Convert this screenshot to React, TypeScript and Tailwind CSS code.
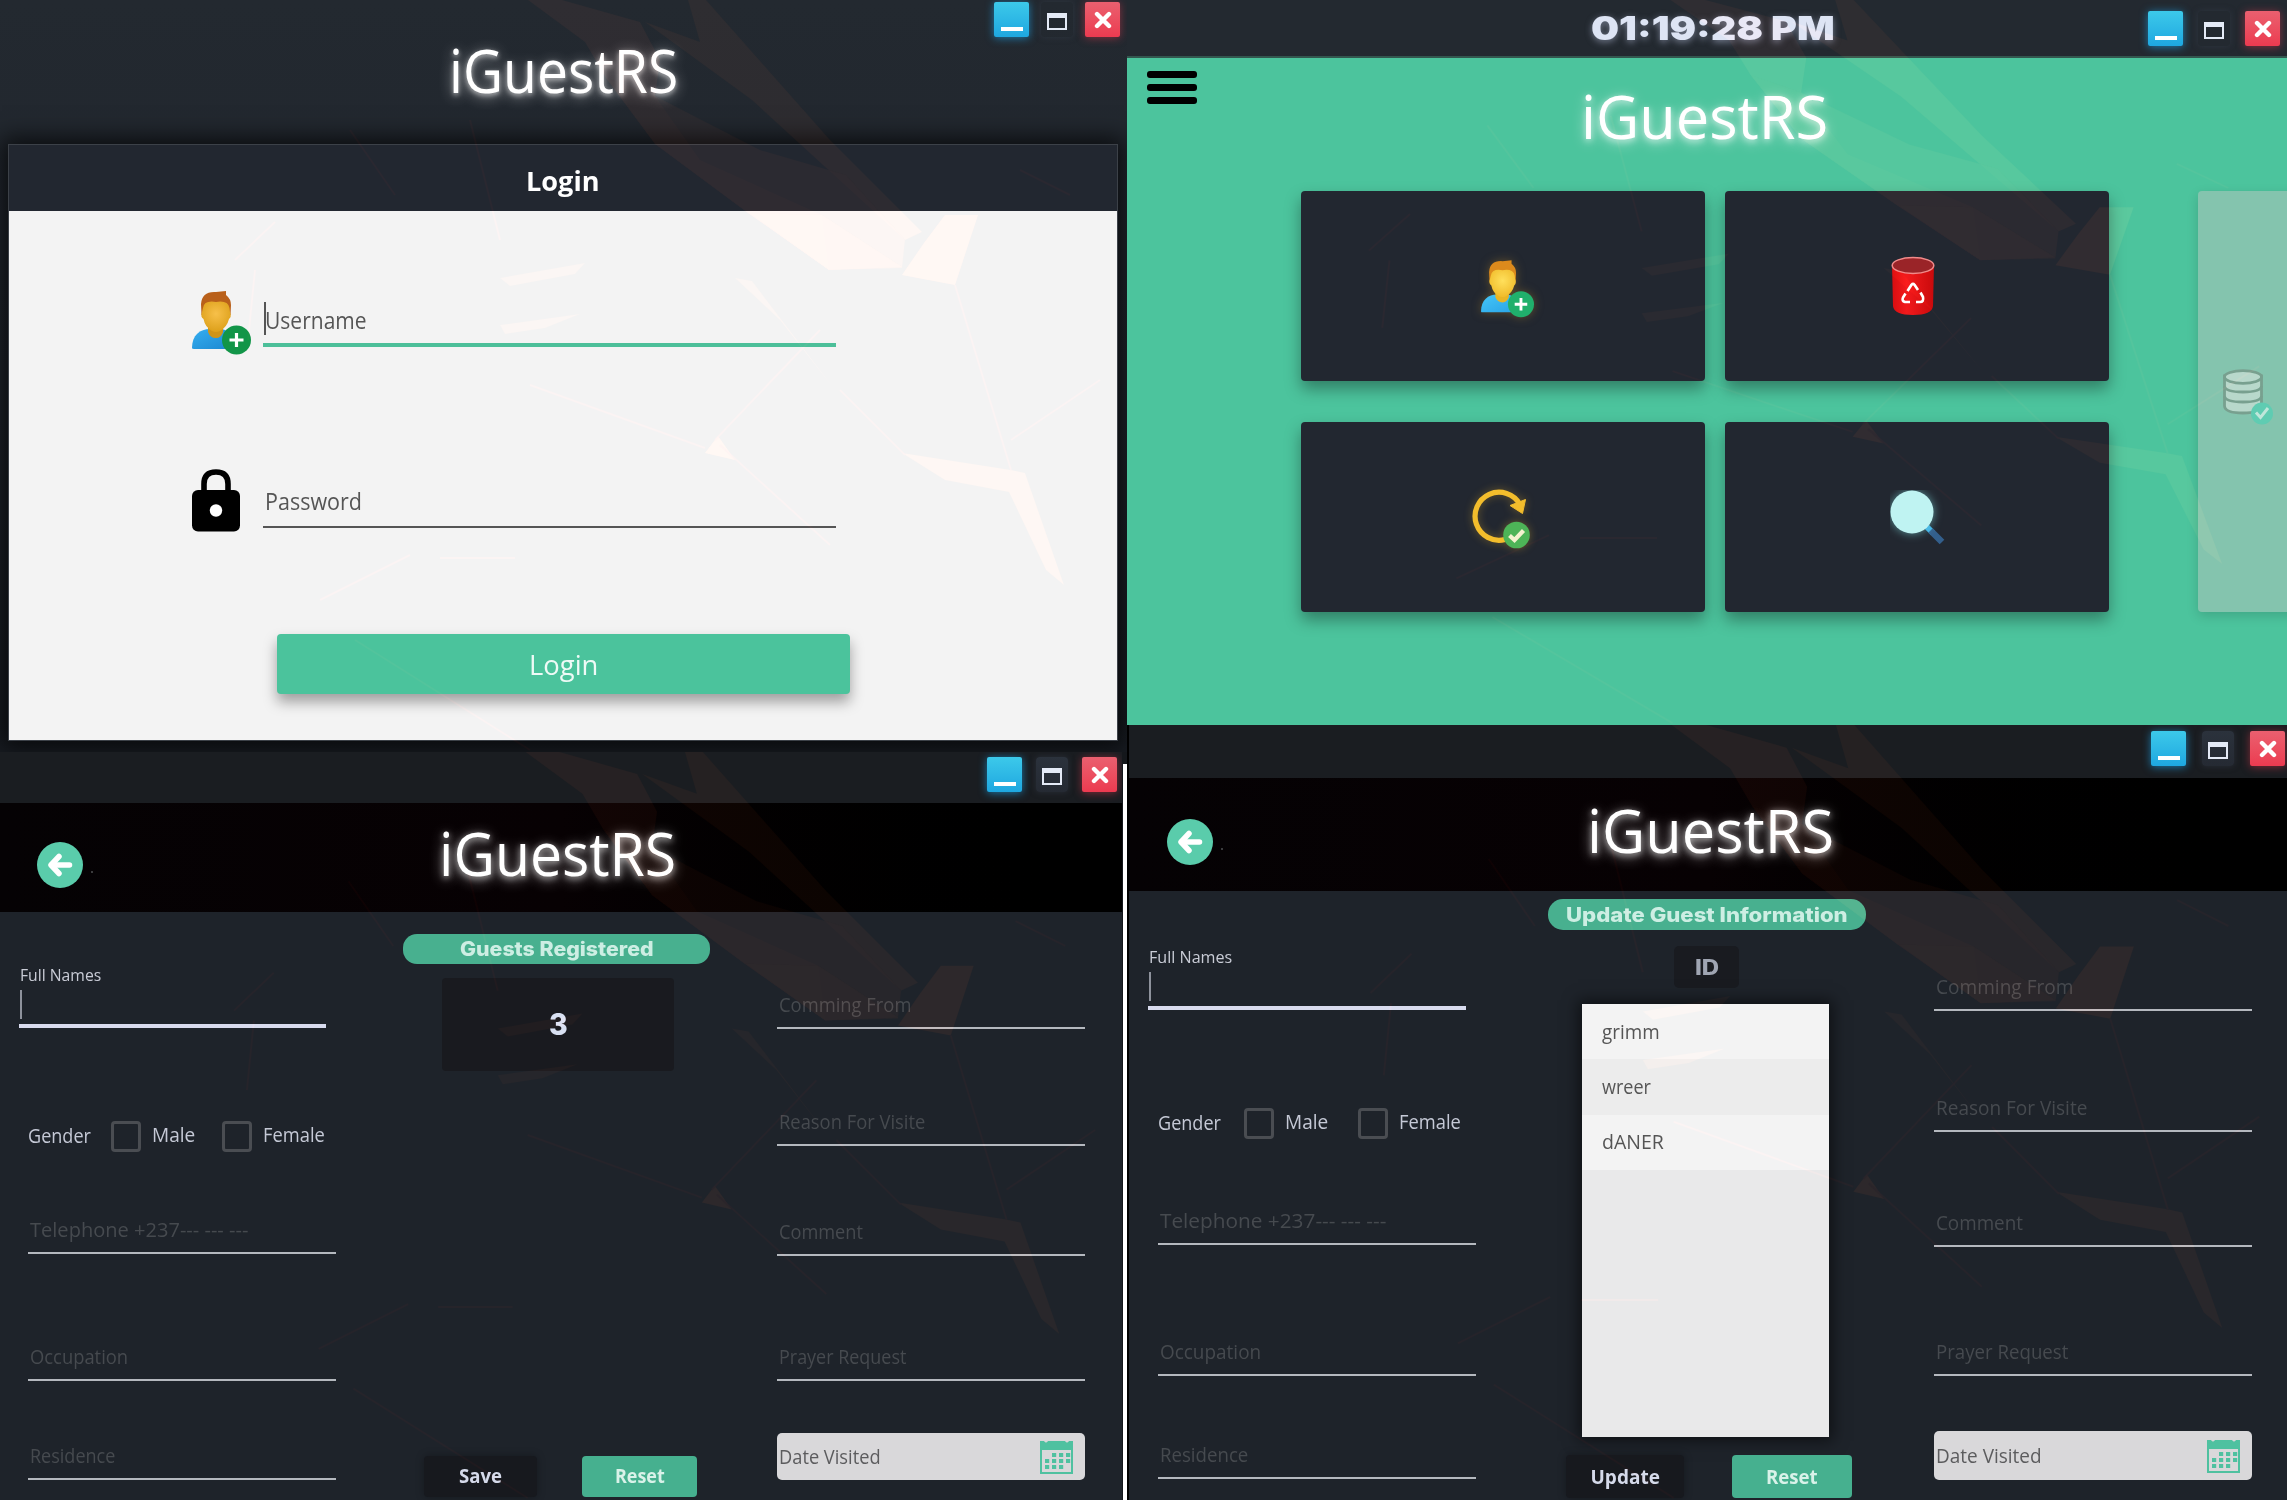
import { useLayoutEffect, useRef, useState, type ReactNode } from "react";

/* Text squeezed horizontally to an exact width. */
function Fit({ w, children, className = "" }: { w: number; children: ReactNode; className?: string }) {
  const ref = useRef<HTMLSpanElement>(null);
  const [scale, setScale] = useState(1);
  useLayoutEffect(() => {
    if (ref.current) setScale(w / ref.current.offsetWidth);
  }, [w]);
  return (
    <span className={`block whitespace-nowrap ${className}`} style={{ width: w }}>
      <span ref={ref} className="inline-block origin-left" style={{ transform: `scaleX(${scale})` }}>
        {children}
      </span>
    </span>
  );
}

/* Faint faceted wallpaper that shines through every window. */
function Art() {
  return (
    <svg
      className="pointer-events-none absolute inset-0 h-full w-full mix-blend-plus-lighter"
      viewBox="0 0 1127 752"
      preserveAspectRatio="none"
    >
      <g fill="#0f0502">
        <path d="M528 0 L562 0 L640 22 L660 60 L655 96 L700 160 L822 215 L829 270 L748 213 L655 144 L606 78 L585 42Z" opacity="0.8" />
        <path d="M645 22 L700 42 L688 0 L706 0 L830 140 L922 232 L905 240 L752 100Z" opacity="0.7" />
        <path d="M606 78 L655 96 L760 150 L846 175 L905 240 L902 268 L829 270 L748 213 L655 144Z" opacity="0.6" />
      </g>
      <g fill="#0f0501">
        <path d="M749 213 L822 215 L902 267 L829 270Z" opacity="0.7" />
        <path d="M945 215 L978 215 L955 285 L902 275 L924 243Z" />
        <path d="M902 453 L1011 470 L1025 473 L1064 585 L1046 570 L1009 492 L945 480Z" opacity="0.7" />
        <path d="M500 278 L585 263 L575 274 L510 286Z" opacity="0.5" />
        <path d="M500 325 L580 314 L545 328 L505 334Z" opacity="0.5" />
        <path d="M735 278 L752 281 L835 390 L780 320Z" opacity="0.5" />
        <path d="M705 453 L718 436 L735 460Z" />
      </g>
      <g fill="none" stroke="#0c0200" strokeWidth="2" opacity="0.7">
        <path d="M500 240 L470 120 M235 260 L275 222 M248 340 L255 270 M720 445 L830 545 M530 385 L705 448 M715 440 L820 330 M955 285 L1011 470 M1011 440 L1100 380 M1020 170 L1070 195 M355 640 L530 750 M320 600 L410 555 M440 558 L515 558 M840 390 L905 455 M350 130 L395 195" />
      </g>
    </svg>
  );
}

function WindowButtons({ maxClass, gap }: { maxClass: string; gap: string }) {
  return (
    <div className={`flex items-start ${gap}`}>
      <div className="flex h-[35px] w-[35px] items-end justify-center rounded-[2px] bg-gradient-to-b from-[#3cc9ea] to-[#1ea7e0] pb-[6px] shadow-[0_1px_8px_rgba(30,160,225,0.7)]">
        <div className="h-[4px] w-[22px] bg-white" />
      </div>
      <div className={`flex h-[35px] w-[32px] items-center justify-center rounded-[4px] shadow-[0_0_6px_rgba(58,66,80,0.5)] ${maxClass}`}>
        <div className="mt-1 h-[17px] w-[20px] border-2 border-t-[5px] border-[#e4eaf6]" />
      </div>
      <div className="flex h-[35px] w-[35px] items-center justify-center rounded-[2px] bg-gradient-to-b from-[#ea5f6f] to-[#ec3a50] shadow-[0_1px_8px_rgba(236,58,80,0.5)]">
        <svg width="18" height="18" viewBox="0 0 18 18" stroke="#fff" strokeWidth="4.4" strokeLinecap="round">
          <path d="M3 3 L15 15 M15 3 L3 15" />
        </svg>
      </div>
    </div>
  );
}

function Title({ w, className = "" }: { w: number; className?: string }) {
  return (
    <Fit
      w={w}
      className={`h-16 text-[60px] leading-[65px] text-white [text-shadow:0_2px_6px_rgba(255,255,255,0.6),0_3px_14px_rgba(255,255,255,0.6)] ${className}`}
    >
      iGuestRS
    </Fit>
  );
}

function UserAdd({ className, bright = false }: { className: string; bright?: boolean }) {
  const id = bright ? "b" : "d";
  return (
    <svg className={className} viewBox="0 0 59 64">
      <defs>
        <radialGradient id={`face${id}`} cx="0.5" cy="0.4" r="0.6">
          <stop offset="0" stopColor={bright ? "#ffe05c" : "#f7c04a"} />
          <stop offset="1" stopColor={bright ? "#f0bb2a" : "#dda01a"} />
        </radialGradient>
        <linearGradient id={`body${id}`} x1="0" y1="0" x2="1" y2="1">
          <stop offset="0" stopColor={bright ? "#45c6f8" : "#35aef0"} />
          <stop offset="1" stopColor={bright ? "#28a2e6" : "#1b87d0"} />
        </linearGradient>
      </defs>
      <path d="M0 57 C0 44 8 38 18 38 L30 38 C38 40 42 46 42 57 Q42 58 40 58 L2 58 Q0 58 0 57Z" fill={`url(#body${id})`} />
      <path d="M16 30 L31 30 L31 41 Q29 47 24 47 Q18 47 16 41Z" fill={bright ? "#e9b524" : "#cf9418"} />
      <path d="M9.500 24 L9 13 Q10 0 24 1 L34 0 L34 4 Q39 8 39 14 L38.500 24Z" fill={bright ? "#dc8a1c" : "#b9601a"} />
      <path d="M11 17 Q12 9 24 11 Q36 9 37.500 17 L38 21 Q40 26 37 28 Q35 36 28 40 Q24 42 20 40 Q13 36 11.500 28 Q8 26 10 21Z" fill={`url(#face${id})`} />
      <circle cx="44.500" cy="49" r="14.500" fill={bright ? "#20b06c" : "#129548"} />
      <path d="M44.500 42 V56 M37.500 49 H51.500" stroke="#fff" strokeWidth="3.200" />
    </svg>
  );
}

function Lock() {
  return (
    <svg width="48" height="63" viewBox="0 0 48 63">
      <path d="M12 24 V15 Q12 3 24 3 Q36 3 36 15 V24" fill="none" stroke="#000" strokeWidth="5.600" />
      <rect x="0" y="21" width="48" height="41.500" rx="6" />
      <circle cx="24" cy="41.500" r="6.200" fill="#fff" />
    </svg>
  );
}

function Bin() {
  return (
    <svg width="44" height="60" viewBox="0 0 44 60">
      <defs>
        <linearGradient id="bin" x1="0" x2="1">
          <stop offset="0" stopColor="#d80d10" />
          <stop offset="0.35" stopColor="#f21a1c" />
          <stop offset="1" stopColor="#c90a0c" />
        </linearGradient>
      </defs>
      <path d="M1 9 L2 50 Q3 59 22 59 Q41 59 42 50 L43 9Z" fill="url(#bin)" />
      <ellipse cx="22" cy="9.500" rx="20.800" ry="8" fill="#9a2428" stroke="#f08a8a" strokeWidth="1.500" />
      <g fill="none" stroke="#fff" strokeWidth="2.600" strokeLinejoin="round">
        <path d="M16.500 35 L20.500 28.800 Q22 27 23.500 28.800 L27 34" />
        <path d="M29.500 36.500 L32 41 Q33 46 29 46 L25 46" />
        <path d="M19 46 L14 46 Q10.500 45 12 41.500 L14.500 37.500" />
      </g>
    </svg>
  );
}

function Refresh() {
  return (
    <svg width="60" height="60" viewBox="0 0 60 60" className="drop-shadow-[0_0_4px_rgba(240,180,40,0.35)]">
      <path d="M49 15.500 A24 24 0 1 0 34 50.500" fill="none" stroke="#f3bd2c" strokeWidth="5.200" />
      <path d="M39 16.500 L54.500 10.500 L51.500 24.500Z" fill="#f3bd2c" stroke="#f3bd2c" strokeWidth="1" />
      <circle cx="45.500" cy="46" r="13.300" fill="#4db457" />
      <path d="M38.500 46.500 L43.500 51 L52.500 41.500" fill="none" stroke="#f3f2cf" strokeWidth="4.200" />
    </svg>
  );
}

function Search() {
  return (
    <svg width="56" height="56" viewBox="0 0 56 56">
      <path d="M36 36 L43 43" stroke="#3fb0e4" strokeWidth="6" />
      <path d="M40.500 40.500 L52 52" stroke="#335f8c" strokeWidth="6.500" />
      <circle cx="22" cy="22" r="21.500" fill="#bff3f2" className="drop-shadow-[0_0_5px_rgba(130,225,230,0.6)]" />
    </svg>
  );
}

function Database() {
  return (
    <svg width="52" height="58" viewBox="0 0 52 58">
      <g fill="#b8d8cb" stroke="#78a08f" strokeWidth="2.800">
        <path d="M2.500 7 V37 Q3 44 21 44 Q39 44 39.500 37 V7Z" />
        <path d="M2.500 17 Q3 23 21 23 Q39 23 39.500 17 M2.500 27 Q3 33 21 33 Q39 33 39.500 27" fill="none" />
        <ellipse cx="21" cy="8" rx="18.500" ry="6.300" />
      </g>
      <circle cx="40" cy="44.500" r="11" fill="#5fccb2" />
      <path d="M34 43.500 L38.500 48.500 L46 39" fill="none" stroke="#bfe6da" strokeWidth="3" />
    </svg>
  );
}

function Calendar() {
  const dots = [
    [12, 14], [19, 14], [26, 14],
    [5, 20], [12, 20], [19, 20], [26, 20],
    [5, 26], [12, 26], [19, 26],
  ];
  return (
    <svg width="33" height="34" viewBox="0 0 33 34" fill="#4fc1a0">
      <path d="M0 1 H4 Q6 4 8 1 H25 Q27 4 29 1 H33 V34 H0Z M2 10 V32 H31 V10Z" fillRule="evenodd" />
      {dots.map(([x, y]) => (
        <rect key={`${x}-${y}`} x={x} y={y - 1} width="4.200" height="4" />
      ))}
    </svg>
  );
}

function LoginWindow() {
  return (
    <section className="relative flex h-[752px] flex-col overflow-hidden bg-gradient-to-b from-[#232930] via-[#20252d] to-[#181c22]">
      <div className="flex h-[38px] justify-end pt-[2px] pr-[7px]">
        <WindowButtons gap="gap-[12px]" maxClass="" />
      </div>
      <Title w={229} className="mx-auto" />
      <div className="mr-[9px] ml-[8px] mt-[42px] flex h-[597px] flex-col border border-[#3c4148] shadow-[0_0_22px_6px_rgba(0,0,0,0.7)]">
        <div className="flex h-[66px] shrink-0 items-center justify-center bg-[#222730] pt-[5px]">
          <Fit w={74} className="text-[26px] leading-9 font-bold text-white">Login</Fit>
        </div>
        <div className="flex flex-1 flex-col bg-[#f3f3f3]">
          <div className="mt-[80px] ml-[183px] flex">
            <UserAdd className="h-[64px] w-[59px]" />
            <div className="ml-[12px] h-[56px] w-[573px] border-b-[4px] border-[#4cbf99] pt-[11px]">
              <div className="ml-px flex h-[33px] items-center border-l-2 border-[#555] pt-[2px]">
                <Fit w={102} className="-ml-px text-[23.5px] leading-8 text-[#555]">Username</Fit>
              </div>
            </div>
          </div>
          <div className="mt-[114px] ml-[183px] flex">
            <Lock />
            <div className="ml-[23px] h-[59px] w-[573px] border-b-2 border-[#555] pt-[16px]">
              <Fit w={97} className="ml-[2px] text-[23.5px] leading-8 text-[#555]">Password</Fit>
            </div>
          </div>
          <div className="mx-auto mt-[102px] flex h-[60px] w-[573px] items-center justify-center rounded-[4px] bg-[#4bc39c] pt-[2px] shadow-[0_8px_14px_rgba(0,0,0,0.35)]">
            <Fit w={69} className="text-[27px] leading-9 text-[#eefaf6]">Login</Fit>
          </div>
        </div>
      </div>
      <Art />
    </section>
  );
}

const cardShadow = "shadow-[0_8px_16px_rgba(0,0,0,0.35)]";

function DashboardWindow() {
  return (
    <section className="relative flex h-[725px] flex-col overflow-hidden bg-[#4cc49d]">
      <div className="flex h-[58px] border-b-2 border-[#33574f] bg-[#232930] pt-[11px] pr-[7px]">
        <Fit
          w={244}
          className="-mt-px ml-[464px] font-['Inter'] text-[33px] leading-9 font-black text-[#dde4f4] [text-shadow:0_2px_7px_rgba(200,210,240,0.5)]"
        >
          01:19:28 PM
        </Fit>
        <div className="ml-auto">
          <WindowButtons gap="gap-[15px]" maxClass="" />
        </div>
      </div>
      <div className="flex h-[133px]">
        <div className="mt-[13px] ml-[20px] flex w-[50px] flex-col gap-[6px]">
          <div className="h-[7px] rounded-[3px] bg-black" />
          <div className="h-[7px] rounded-[3px] bg-black" />
          <div className="h-[7px] rounded-[3px] bg-black" />
        </div>
        <Title w={247} className="mt-[26px] ml-[384px]" />
      </div>
      <div className="flex pl-[174px]">
        <div className="grid grid-cols-[404px_384px] grid-rows-[190px_190px] gap-x-[20px] gap-y-[41px]">
          <div className={`flex rounded-[4px] bg-[#222730] pt-[69px] pl-[180px] ${cardShadow}`}>
            <UserAdd bright className="h-[58px] w-[53px] drop-shadow-[0_0_5px_rgba(160,120,40,0.5)]" />
          </div>
          <div className={`flex rounded-[4px] bg-[#222730] pt-[65px] pl-[166px] ${cardShadow}`}>
            <Bin />
          </div>
          <div className={`flex rounded-[4px] bg-[#222730] pt-[67px] pl-[170px] ${cardShadow}`}>
            <Refresh />
          </div>
          <div className={`flex rounded-[4px] bg-[#222730] pt-[68px] pl-[165px] ${cardShadow}`}>
            <Search />
          </div>
        </div>
        <div className="ml-[89px] flex h-[421px] w-[100px] shrink-0 rounded-l-[4px] bg-[#84c4ae] pt-[178px] pl-[24px] shadow-[0_4px_12px_rgba(0,0,0,0.15)]">
          <Database />
        </div>
      </div>
      <Art />
    </section>
  );
}

function Field({ label, w, className }: { label: string; w: number; className: string }) {
  return (
    <div className={`flex flex-col justify-end ${className}`}>
      <Fit w={w} className="mb-2 ml-[2px] text-[19.5px] leading-7 text-[#464a4f]">{label}</Fit>
      <div className="h-[2px] bg-[#b4b8be]" />
    </div>
  );
}

type FormSpec = {
  buttons: { bar: string; gap: string };
  header: string;
  back: string;
  titleWidth: number;
  titleClass: string;
  leftCol: string;
  nameTop: string;
  nameWidth: number;
  nameLine: string;
  gender: string;
  genderGap: string;
  box2: string;
  inset: string;
  left: [string, string, string];
  leftWidths: [number, number, number];
  rightCol: string;
  right: [string, string, string, string];
  rightWidths: [number, number, number, number];
  date: string;
  dateWidth: number;
  middle: ReactNode;
};

function FormWindow({ s }: { s: FormSpec }) {
  return (
    <>
      <div className={`flex justify-end bg-[#1a1d21] ${s.buttons.bar}`}>
        <WindowButtons gap={s.buttons.gap} maxClass="bg-gradient-to-b from-[#2b323c] to-[#252a33]" />
      </div>
      <div className={`flex bg-gradient-to-r from-[#050204] via-[#070103] to-black ${s.header}`}>
        <div className={`flex items-start ${s.back}`}>
          <div className="flex size-[46px] items-center justify-center rounded-full bg-[#5accab]">
            <svg width="26" height="24" viewBox="0 0 26 24" fill="none" stroke="#fff" strokeWidth="5.500" strokeLinecap="round" strokeLinejoin="round">
              <path d="M12 3.500 L4 12 L12 20.500" />
              <path d="M5 12 H22.500" />
            </svg>
          </div>
          <div className="mt-[29px] ml-[8px] size-[2px] bg-[#3c3c3e]" />
        </div>
        <Title w={s.titleWidth} className={s.titleClass} />
      </div>
      <div className="flex flex-1 bg-[#1e232a]">
        <div className={s.leftCol}>
          <div className={s.nameTop}>
            <Fit w={s.nameWidth} className="ml-px text-[16.5px] leading-6 text-[#c9ccd6]">Full Names</Fit>
            <div className="mt-[3px] ml-px h-[29px] w-[2px] bg-[#8e929c]" />
            <div className={`mt-[5px] bg-[#d8dbee] ${s.nameLine}`} />
          </div>
          <div className={`flex text-[19.5px] text-[#c5c9d6] ${s.gender}`}>
            <Fit w={63} className="mt-px leading-7">Gender</Fit>
            <div className={`h-[31px] w-[30px] rounded-[4px] border-[3px] border-[#4a4d52] ${s.genderGap}`} />
            <Fit w={43} className="ml-[11px] leading-7">Male</Fit>
            <div className={`h-[31px] w-[30px] rounded-[4px] border-[3px] border-[#4a4d52] ${s.box2}`} />
            <Fit w={62} className="ml-[11px] leading-7">Female</Fit>
          </div>
          <div className={s.inset}>
            <Field label="Telephone +237--- --- ---" w={s.leftWidths[0]} className={s.left[0]} />
            <Field label="Occupation" w={s.leftWidths[1]} className={s.left[1]} />
            <Field label="Residence" w={s.leftWidths[2]} className={s.left[2]} />
          </div>
        </div>
        {s.middle}
        <div className={s.rightCol}>
          <Field label="Comming From" w={s.rightWidths[0]} className={s.right[0]} />
          <Field label="Reason For Visite" w={s.rightWidths[1]} className={s.right[1]} />
          <Field label="Comment" w={s.rightWidths[2]} className={s.right[2]} />
          <Field label="Prayer Request" w={s.rightWidths[3]} className={s.right[3]} />
          <div className={`flex items-center justify-between rounded-[5px] bg-[#d9d8da] pr-[12px] pl-[2px] ${s.date}`}>
            <Fit w={s.dateWidth} className="text-[19.5px] leading-7 text-[#5c5c5e]">Date Visited</Fit>
            <Calendar />
          </div>
        </div>
      </div>
      <Art />
    </>
  );
}

const register: FormSpec = {
  buttons: { bar: "h-[51px] pt-[5px] pr-[5px]", gap: "gap-[14px]" },
  header: "h-[109px]",
  back: "w-[439px] pt-[39px] pl-[37px]",
  titleWidth: 237,
  titleClass: "mt-[18px]",
  leftCol: "w-[403px] pl-[19px]",
  nameTop: "pt-[51px]",
  nameWidth: 81,
  nameLine: "h-[4px] w-[307px]",
  gender: "mt-[93px] h-[30px] ml-[9px]",
  genderGap: "ml-[20px]",
  box2: "ml-[27px]",
  inset: "ml-[9px] w-[308px]",
  left: ["h-[103px]", "h-[127px]", "h-[99px]"],
  leftWidths: [218, 98, 85],
  rightCol: "ml-[67px] w-[308px]",
  right: ["h-[117px]", "h-[117px]", "h-[110px]", "h-[125px]"],
  rightWidths: [132, 146, 84, 127],
  date: "mt-[52px] h-[47px]",
  dateWidth: 102,
  middle: (
    <div className="flex w-[307px] flex-col">
      <div className="mt-[22px] flex h-[30px] items-center justify-center rounded-[14px] bg-[#48b08f]">
        <Fit w={194} className="font-['Inter'] text-[20px] leading-7 font-extrabold text-[#cdeee3]">Guests Registered</Fit>
      </div>
      <div className="mt-[14px] ml-[39px] flex h-[93px] w-[232px] items-center justify-center rounded-[4px] bg-[#191a1f] pb-px">
        <Fit w={19} className="font-['Inter'] text-[30px] leading-9 font-extrabold text-[#d8e0f2]">3</Fit>
      </div>
      <div className="mt-[385px] ml-[21px] flex h-[41px] gap-[45px] text-[19px] font-bold">
        <div className="flex w-[113px] items-center justify-center rounded-[4px] bg-[#17191e] pb-[2px] shadow-[0_0_8px_rgba(0,0,0,0.3)]">
          <Fit w={43} className="leading-7 text-[#d5daea]">Save</Fit>
        </div>
        <div className="flex w-[115px] items-center justify-center rounded-[4px] bg-[#46b08f] pb-[2px]">
          <Fit w={50} className="leading-7 text-[#d9f2e9]">Reset</Fit>
        </div>
      </div>
    </div>
  ),
};

const update: FormSpec = {
  buttons: { bar: "h-[53px] pt-[6px] pr-[2px]", gap: "gap-[16px]" },
  header: "h-[113px]",
  back: "w-[458px] pt-[41px] pl-[38px]",
  titleWidth: 247,
  titleClass: "mt-[20px]",
  leftCol: "w-[419px] pl-[19px]",
  nameTop: "pt-[54px]",
  nameWidth: 83,
  nameLine: "h-[4px] w-[318px]",
  gender: "mt-[98px] h-[31px] ml-[10px]",
  genderGap: "ml-[23px]",
  box2: "ml-[30px]",
  inset: "ml-[10px] w-[318px]",
  left: ["h-[106px]", "h-[131px]", "h-[103px]"],
  leftWidths: [226, 101, 88],
  rightCol: "ml-[68px] w-[318px]",
  right: ["h-[120px]", "h-[121px]", "h-[115px]", "h-[129px]"],
  rightWidths: [137, 151, 87, 132],
  date: "mt-[55px] h-[49px]",
  dateWidth: 106,
  middle: (
    <div className="flex w-[318px] flex-col">
      <div className="mt-[8px] flex h-[31px] items-center justify-center rounded-[15px] bg-[#48b08f]">
        <Fit w={282} className="font-['Inter'] text-[20px] leading-7 font-extrabold text-[#cdeee3]">Update Guest Information</Fit>
      </div>
      <div className="mt-[16px] ml-[126px] flex h-[42px] w-[65px] items-center justify-center rounded-[5px] bg-[#191b20] pt-px">
        <Fit w={24} className="font-['Inter'] text-[21px] leading-7 font-extrabold text-[#9fa5b2]">ID</Fit>
      </div>
      <div className="mt-[16px] ml-[34px] flex h-[433px] w-[247px] flex-col bg-[#e9e9ea] text-[19.5px] leading-7 text-[#555] shadow-[0_0_14px_4px_rgba(0,0,0,0.5)]">
        <div className="flex h-[55px] items-center bg-[#f3f3f3] pl-[20px]">
          <Fit w={58}>grimm</Fit>
        </div>
        <div className="flex h-[56px] items-center bg-[#ececec] pl-[20px]">
          <Fit w={49}>wreer</Fit>
        </div>
        <div className="flex h-[55px] items-center bg-[#f3f3f3] pb-[2px] pl-[20px]">
          <Fit w={62}>dANER</Fit>
        </div>
      </div>
      <div className="mt-[18px] ml-[18px] flex h-[43px] gap-[48px] text-[19px] font-bold">
        <div className="flex w-[118px] items-center justify-center rounded-[4px] bg-[#17191e] shadow-[0_0_8px_rgba(0,0,0,0.3)]">
          <Fit w={69} className="leading-7 text-[#d5daea]">Update</Fit>
        </div>
        <div className="flex w-[120px] items-center justify-center rounded-[4px] bg-[#46b08f]">
          <Fit w={52} className="leading-7 text-[#d9f2e9]">Reset</Fit>
        </div>
      </div>
    </div>
  ),
};

export default function App() {
  return (
    <div className="flex h-[1500px] w-[2287px] overflow-hidden bg-[#14171b] font-['Open_Sans',sans-serif]">
      <div className="flex w-[1127px] flex-col">
        <LoginWindow />
        <div className="flex h-[748px]">
          <section className="relative flex w-[1122px] flex-col overflow-hidden">
            <FormWindow s={register} />
          </section>
          <div className="mt-[12px] ml-px w-[4px] bg-white" />
        </div>
      </div>
      <div className="flex w-[1160px] flex-col">
        <DashboardWindow />
        <section className="relative flex h-[775px] flex-col overflow-hidden border-l-2 border-black">
          <FormWindow s={update} />
        </section>
      </div>
    </div>
  );
}
